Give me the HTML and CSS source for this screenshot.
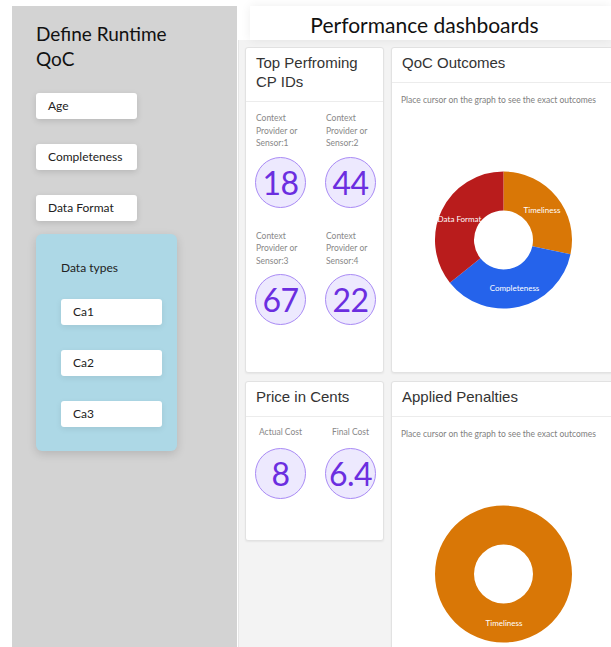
FILE: index.html
```html
<!DOCTYPE html>
<html lang="en">
<head>
<meta charset="utf-8">
<title>Runtime QoC</title>
<link rel="stylesheet" href="styles.css">
</head>
<body>
<div class="page">
  <aside class="sidebar">
    <h1 class="side-title">Define Runtime<br>QoC</h1>
    <div class="chip">Age</div>
    <div class="chip">Completeness</div>
    <div class="chip">Data Format</div>
    <div class="types">
      <div class="types-title">Data types</div>
      <div class="chip">Ca1</div>
      <div class="chip">Ca2</div>
      <div class="chip">Ca3</div>
    </div>
  </aside>

  <main class="main">
    <header class="main-head">
      <h2 class="main-title">Performance dashboards</h2>
    </header>

    <div class="board">
      <div class="col col-narrow">
        <section class="card card-top">
          <h3 class="card-title">Top Perfroming<br>CP IDs</h3>
          <div class="card-body stats">
            <div class="stat">
              <p class="stat-label">Context<br>Provider or<br>Sensor:1</p>
              <div class="bubble">18</div>
            </div>
            <div class="stat">
              <p class="stat-label">Context<br>Provider or<br>Sensor:2</p>
              <div class="bubble">44</div>
            </div>
            <div class="stat">
              <p class="stat-label">Context<br>Provider or<br>Sensor:3</p>
              <div class="bubble">67</div>
            </div>
            <div class="stat">
              <p class="stat-label">Context<br>Provider or<br>Sensor:4</p>
              <div class="bubble">22</div>
            </div>
          </div>
        </section>

        <section class="card card-price">
          <h3 class="card-title">Price in Cents</h3>
          <div class="card-body stats">
            <div class="stat stat-center">
              <p class="stat-label">Actual Cost</p>
              <div class="bubble">8</div>
            </div>
            <div class="stat stat-center">
              <p class="stat-label">Final Cost</p>
              <div class="bubble">6.4</div>
            </div>
          </div>
        </section>
      </div>

      <div class="col col-wide">
        <section class="card card-qoc">
          <h3 class="card-title">QoC Outcomes</h3>
          <div class="card-body chart-body">
            <p class="hint">Place cursor on the graph to see the exact outcomes</p>
            <svg class="donut" viewBox="-111.5 -110 223 180" width="223" height="180">
              <path fill="#d97706" d="M0,-68.5 A68.5,68.5 0 0 1 67,14.24 L28.85,6.13 A29.5,29.5 0 0 0 0,-29.5 Z"/>
              <path fill="#2563eb" d="M67,14.24 A68.5,68.5 0 0 1 -53.61,42.64 L-23.09,18.36 A29.5,29.5 0 0 0 28.85,6.13 Z"/>
              <path fill="#b91c1c" d="M-53.61,42.64 A68.5,68.5 0 0 1 0,-68.5 L0,-29.5 A29.5,29.5 0 0 0 -23.09,18.36 Z"/>
              <text class="slice-label" x="38.5" y="-27.5">Timeliness</text>
              <text class="slice-label" x="-44" y="-18.5">Data Format</text>
              <text class="slice-label" x="11" y="50.5">Completeness</text>
            </svg>
          </div>
        </section>

        <section class="card card-penalty">
          <h3 class="card-title">Applied Penalties</h3>
          <div class="card-body chart-body">
            <p class="hint">Place cursor on the graph to see the exact outcomes</p>
            <svg class="donut" viewBox="-111.5 -110 223 180" width="223" height="180">
              <path fill="#d97706" fill-rule="evenodd" d="M0,-68.5 A68.5,68.5 0 1 1 0,68.5 A68.5,68.5 0 1 1 0,-68.5 Z M0,-29.5 A29.5,29.5 0 1 0 0,29.5 A29.5,29.5 0 1 0 0,-29.5 Z"/>
              <text class="slice-label" x="0.5" y="51.5">Timeliness</text>
            </svg>
          </div>
        </section>
      </div>
    </div>
  </main>
</div>
</body>
</html>
```

FILE: styles.css
```css
html, body {
  margin: 0;
  padding: 0;
  overflow: hidden;
  background: #ffffff;
}

.page {
  display: flex;
  align-items: stretch;
  height: 641px;
  padding: 6px 0 0 12px;
  font-family: "Lato", "DejaVu Sans", sans-serif;
  color: #1a1a1a;
}

/* ---------- left panel ---------- */
.sidebar {
  flex: 0 0 225px;
  background: #d3d3d3;
  padding: 15px 0 0 24px;
  box-sizing: border-box;
}

.side-title {
  margin: 0 0 22px;
  font-size: 19px;
  line-height: 25px;
  font-weight: 400;
  color: #111;
}

.chip {
  width: 101px;
  height: 26px;
  line-height: 26px;
  box-sizing: border-box;
  padding-left: 12px;
  background: #fff;
  border-radius: 3px;
  box-shadow: 0 2px 6px rgba(0, 0, 0, 0.13);
  font-size: 12px;
  color: #222;
  margin-bottom: 25px;
}

.sidebar > .chip:nth-of-type(3) {
  margin-bottom: 13px;
}

.types {
  width: 141px;
  height: 217px;
  box-sizing: border-box;
  padding: 27px 0 0 25px;
  background: #add8e6;
  border-radius: 6px;
  box-shadow: 0 3px 10px rgba(0, 0, 0, 0.14);
}

.types-title {
  font-size: 12px;
  line-height: 14px;
  color: #222;
  margin-bottom: 24px;
}

.types .chip {
  box-shadow: 0 2px 6px rgba(0, 0, 0, 0.08);
  margin-bottom: 25px;
}

/* ---------- dashboard ---------- */
.main {
  flex: 0 0 378px;
  display: flex;
  flex-direction: column;
  margin-left: 1px;
}

.main-head {
  flex: 0 0 34px;
  height: 34px;
  box-sizing: border-box;
  padding-top: 3px;
  margin: 0 6px 0 12px;
  background: #fff;
  box-shadow: 0 0 10px rgba(0, 0, 0, 0.07);
  position: relative;
  z-index: 1;
}

.main-title {
  margin: 0;
  text-align: center;
  font-size: 21px;
  line-height: 31px;
  font-weight: 400;
  color: #111;
  transform: translateX(-6px);
}

.board {
  flex: 1;
  display: flex;
  gap: 7px;
  padding: 7px 3px 0 6px;
  background: #f3f3f3;
  border-left: 1px solid #e6e6e6;
  overflow: hidden;
}

.col {
  display: flex;
  flex-direction: column;
  gap: 8px;
  min-width: 0;
}

.col-narrow { flex: 0 0 139px; }
.col-wide { flex: 0 0 223px; }

.card {
  flex-shrink: 0;
  background: #fff;
  border: 1px solid #e2e2e2;
  border-radius: 3px;
  box-shadow: 0 1px 2px rgba(0, 0, 0, 0.06);
  box-sizing: border-box;
}

.card-top, .card-qoc { height: 326px; }
.card-price { height: 160px; }
.card-penalty { height: 320px; }

.card-title {
  margin: 0;
  padding: 5px 10px 10px;
  font-family: "Liberation Sans", Arial, sans-serif;
  font-size: 15px;
  line-height: 19px;
  font-weight: 400;
  color: #333;
  border-bottom: 1px solid #ececec;
}

.stats {
  display: grid;
  grid-template-columns: 70px 55px;
  padding: 10px 0 0 9px;
  row-gap: 22px;
}

.stat-label {
  margin: 0 0 7px 1px;
  font-size: 8.5px;
  line-height: 12.5px;
  color: #888;
  white-space: nowrap;
}

.stat-center .stat-label {
  width: 51px;
  margin-left: 0;
  text-align: center;
}

.card-price .stats { padding-top: 9px; }
.card-price .stat-label { margin-bottom: 9px; }

.bubble {
  width: 51px;
  height: 51px;
  box-sizing: border-box;
  border: 1px solid #a98af5;
  border-radius: 50%;
  background: #ede9fe;
  display: flex;
  align-items: center;
  justify-content: center;
  font-size: 32px;
  font-weight: 400;
  color: #6b2ee0;
  letter-spacing: -0.5px;
}

.chart-body {
  padding: 11px 0 0;
}

.hint {
  margin: 0 0 0 9px;
  font-size: 8.5px;
  line-height: 12px;
  color: #808080;
  white-space: nowrap;
}

.donut {
  display: block;
  margin-top: 24px;
}

.slice-label {
  font-family: "Lato", sans-serif;
  font-size: 8px;
  fill: #ffffff;
  text-anchor: middle;
}
```
